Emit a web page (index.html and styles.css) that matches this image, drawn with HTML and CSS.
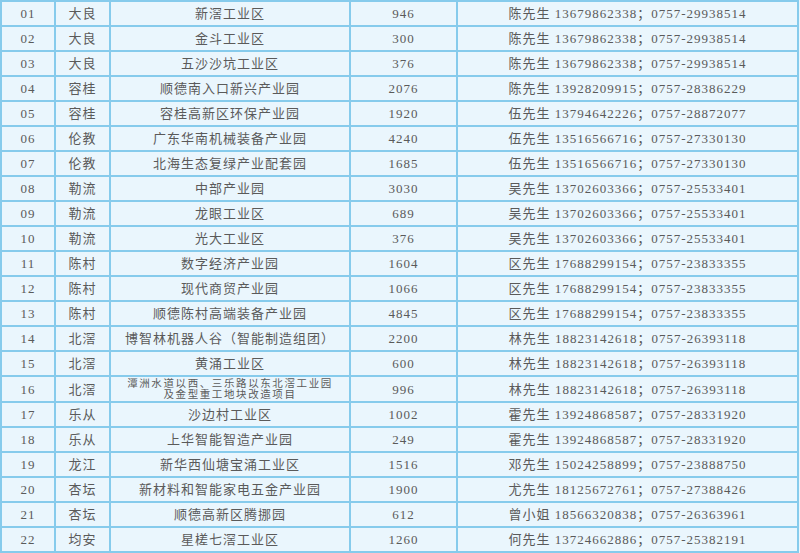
FILE: index.html
```html
<!DOCTYPE html>
<html lang="zh-CN">
<head>
<meta charset="utf-8">
<link rel="stylesheet" href="styles.css">
</head>
<body>
<table class="park">
<colgroup>
<col class="c-no"><col class="c-area"><col class="c-name"><col class="c-num"><col class="c-contact">
</colgroup>
<tbody>
<tr><td>01</td><td>大良</td><td>新滘工业区</td><td>946</td><td>陈先生 13679862338；0757-29938514</td></tr>
<tr><td>02</td><td>大良</td><td>金斗工业区</td><td>300</td><td>陈先生 13679862338；0757-29938514</td></tr>
<tr><td>03</td><td>大良</td><td>五沙沙坑工业区</td><td>376</td><td>陈先生 13679862338；0757-29938514</td></tr>
<tr><td>04</td><td>容桂</td><td>顺德南入口新兴产业园</td><td>2076</td><td>陈先生 13928209915；0757-28386229</td></tr>
<tr><td>05</td><td>容桂</td><td>容桂高新区环保产业园</td><td>1920</td><td>伍先生 13794642226；0757-28872077</td></tr>
<tr><td>06</td><td>伦教</td><td>广东华南机械装备产业园</td><td>4240</td><td>伍先生 13516566716；0757-27330130</td></tr>
<tr><td>07</td><td>伦教</td><td>北海生态复绿产业配套园</td><td>1685</td><td>伍先生 13516566716；0757-27330130</td></tr>
<tr><td>08</td><td>勒流</td><td>中部产业园</td><td>3030</td><td>吴先生 13702603366；0757-25533401</td></tr>
<tr><td>09</td><td>勒流</td><td>龙眼工业区</td><td>689</td><td>吴先生 13702603366；0757-25533401</td></tr>
<tr><td>10</td><td>勒流</td><td>光大工业区</td><td>376</td><td>吴先生 13702603366；0757-25533401</td></tr>
<tr><td>11</td><td>陈村</td><td>数字经济产业园</td><td>1604</td><td>区先生 17688299154；0757-23833355</td></tr>
<tr><td>12</td><td>陈村</td><td>现代商贸产业园</td><td>1066</td><td>区先生 17688299154；0757-23833355</td></tr>
<tr><td>13</td><td>陈村</td><td>顺德陈村高端装备产业园</td><td>4845</td><td>区先生 17688299154；0757-23833355</td></tr>
<tr><td>14</td><td>北滘</td><td>博智林机器人谷（智能制造组团）</td><td>2200</td><td>林先生 18823142618；0757-26393118</td></tr>
<tr><td>15</td><td>北滘</td><td>黄涌工业区</td><td>600</td><td>林先生 18823142618；0757-26393118</td></tr>
<tr class="tall"><td>16</td><td>北滘</td><td class="small">潭洲水道以西、三乐路以东北滘工业园<br>及金型重工地块改造项目</td><td>996</td><td>林先生 18823142618；0757-26393118</td></tr>
<tr><td>17</td><td>乐从</td><td>沙边村工业区</td><td>1002</td><td>霍先生 13924868587；0757-28331920</td></tr>
<tr><td>18</td><td>乐从</td><td>上华智能智造产业园</td><td>249</td><td>霍先生 13924868587；0757-28331920</td></tr>
<tr><td>19</td><td>龙江</td><td>新华西仙塘宝涌工业区</td><td>1516</td><td>邓先生 15024258899；0757-23888750</td></tr>
<tr><td>20</td><td>杏坛</td><td>新材料和智能家电五金产业园</td><td>1900</td><td>尤先生 18125672761；0757-27388426</td></tr>
<tr><td>21</td><td>杏坛</td><td>顺德高新区腾挪园</td><td>612</td><td>曾小姐 18566320838；0757-26363961</td></tr>
<tr><td>22</td><td>均安</td><td>星槎七滘工业区</td><td>1260</td><td>何先生 13724662886；0757-25382191</td></tr>
</tbody>
</table>
</body>
</html>
```
FILE: styles.css
```css
html, body {
  margin: 0;
  padding: 0;
  background: #eaf6fd;
  overflow: hidden;
}
.park {
  border-collapse: collapse;
  table-layout: fixed;
  width: 799px;
  background: #eaf6fd;
  font-family: "Liberation Serif", "Noto Sans CJK SC", serif;
  font-size: 13px;
  color: #5a5a5a;
  letter-spacing: 1px;
}
.c-no { width: 54px; }
.c-area { width: 55px; }
.c-name { width: 240px; }
.c-num { width: 107px; }
.c-contact { width: 341px; }
.park td {
  border: 2px solid #86cbec;
  height: 23px;
  padding: 0;
  text-align: center;
  vertical-align: middle;
  white-space: nowrap;
  line-height: 15px;
}
.park tr.tall td {
  height: 24px;
}
.park td.small {
  font-size: 10.5px;
  line-height: 11px;
  letter-spacing: 1.6px;
}
```
